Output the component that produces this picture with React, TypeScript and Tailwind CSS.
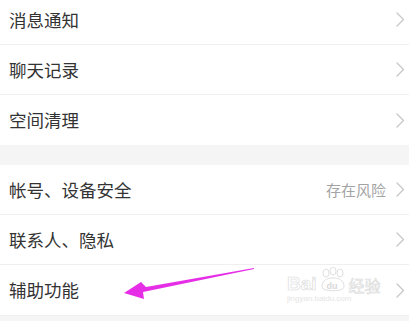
import React from "react";

const Chevron = () => (
  <svg width="9" height="15" viewBox="0 0 9 15" className="shrink-0">
    <polyline points="1,1 7.5,7.5 1,14" fill="none" stroke="#c9c9c9" strokeWidth="1.4" strokeLinecap="round" strokeLinejoin="round" />
  </svg>
);

type RowProps = { label: string; value?: string; last?: boolean; children?: React.ReactNode };

const Row = ({ label, value, last, children }: RowProps) => (
  <div className={`relative flex h-[50px] items-center justify-between bg-white pl-[9px] pr-[4px] ${last ? "" : "border-b border-[#efefef]"}`}>
    <span className="text-[17.5px] leading-none text-[#333333]">{label}</span>
    <div className="flex items-center gap-[10px]">
      {value && <span className="text-[15px] leading-none text-[#a3a3a3]">{value}</span>}
      <Chevron />
    </div>
    {children}
  </div>
);

export default function App() {
  return (
    <div
      className="relative h-[321px] w-[409px] overflow-hidden bg-[#f5f5f5]"
      style={{ fontFamily: '"Noto Sans CJK SC", "Noto Sans", sans-serif' }}
    >
      <div className="-mt-[5px] flex flex-col">
        <Row label="消息通知" />
        <Row label="聊天记录" />
        <Row label="空间清理" last />
      </div>
      <div className="h-[20px]" />
      <div className="flex flex-col border-b border-[#efefef]">
        <Row label="帐号、设备安全" value="存在风险" />
        <Row label="联系人、隐私" />
        <Row label="辅助功能" last>
          <div className="pointer-events-none absolute left-[287px] top-[2px] flex flex-col items-start opacity-80">
            <div className="flex items-end gap-[1px]">
              <span className="text-[19px] font-bold leading-none text-white [-webkit-text-stroke:0.6px_#cfcfcf]" style={{ fontFamily: '"Liberation Sans", sans-serif' }}>
                Bai
              </span>
              <svg width="30" height="26" viewBox="0 0 30 26">
                <g fill="white" stroke="#cfcfcf" strokeWidth="0.8">
                  <ellipse cx="8" cy="6" rx="3" ry="4" />
                  <ellipse cx="15" cy="4" rx="3" ry="4" />
                  <ellipse cx="22" cy="6" rx="3" ry="4" />
                  <path d="M4 20 C4 13 9 11 15 11 C21 11 26 13 26 20 C26 25 4 25 4 20 Z" />
                </g>
                <text x="8.5" y="22" fontSize="9" fontWeight="bold" fill="#cfcfcf" fontFamily="Liberation Sans, sans-serif">du</text>
              </svg>
              <span className="text-[16px] leading-none text-white [-webkit-text-stroke:0.6px_#cfcfcf]">经验</span>
            </div>
            <span className="mt-[2px] text-[8px] leading-none text-[#e0e0e0]" style={{ fontFamily: '"Liberation Sans", sans-serif' }}>
              jingyan.baidu.com
            </span>
          </div>
        </Row>
      </div>
      <svg className="pointer-events-none absolute left-0 top-0" width="409" height="321" viewBox="0 0 409 321">
        <polygon points="254,268 146,287 141,282 124,293 144,299 143,292 254,269" fill="#e62ee6" />
      </svg>
    </div>
  );
}
